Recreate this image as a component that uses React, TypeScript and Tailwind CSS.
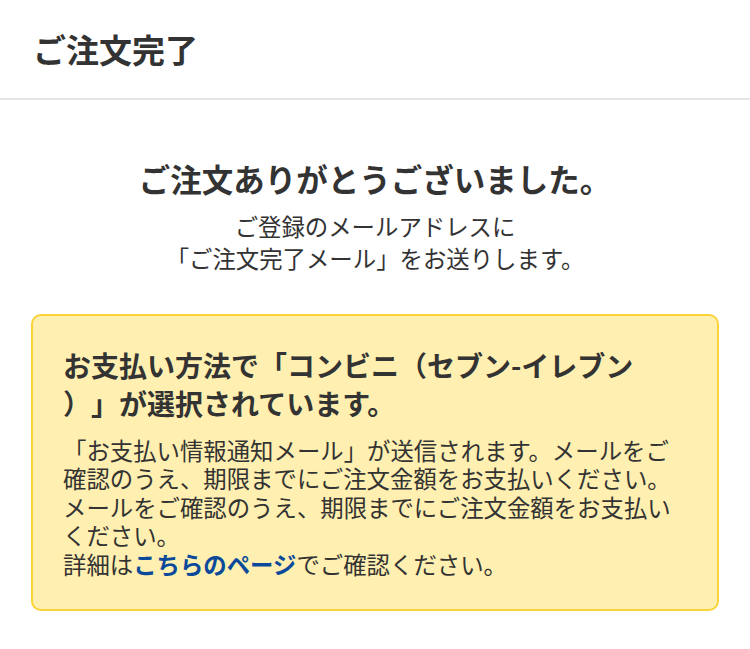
export default function App() {
  return (
    <div className="min-h-screen bg-white text-[#333] font-['Noto_Sans_CJK_JP',sans-serif] [text-spacing-trim:space-all]">
      <header className="h-[100px] flex items-center px-[33px] border-b-2 border-[#e6e6e6]">
        <h1 className="text-[33px] font-bold leading-none">ご注文完了</h1>
      </header>

      <main className="px-[31px] pt-[58px] pb-10">
        <h2 className="text-center text-[31.5px] font-bold leading-[40px]">
          ご注文ありがとうございました。
        </h2>
        <p className="mt-3 text-center text-[23.4px] leading-[32px]">
          ご登録のメールアドレスに
          <br />
          「ご注文完了メール」をお送りします。
        </p>

        <section className="mt-10 rounded-[10px] border-2 border-[#fad337] bg-[#ffefb0] px-[30px] pt-[30px] pb-[31px]">
          <h3 className="text-[28px] font-bold leading-[38px]">
            お支払い方法で「コンビニ（セブン-イレブン
            <br />
            ）」が選択されています。
          </h3>
          <p className="mt-[14px] text-[23.4px] leading-[28.4px]">
            「お支払い情報通知メール」が送信されます。メールをご確認のうえ、期限までにご注文金額をお支払いください。
            <br />
            メールをご確認のうえ、期限までにご注文金額をお支払いください。
            <br />
            詳細は
            <a href="#" className="font-bold text-[#0b4a9b]">
              こちらのページ
            </a>
            でご確認ください。
          </p>
        </section>
      </main>
    </div>
  );
}
